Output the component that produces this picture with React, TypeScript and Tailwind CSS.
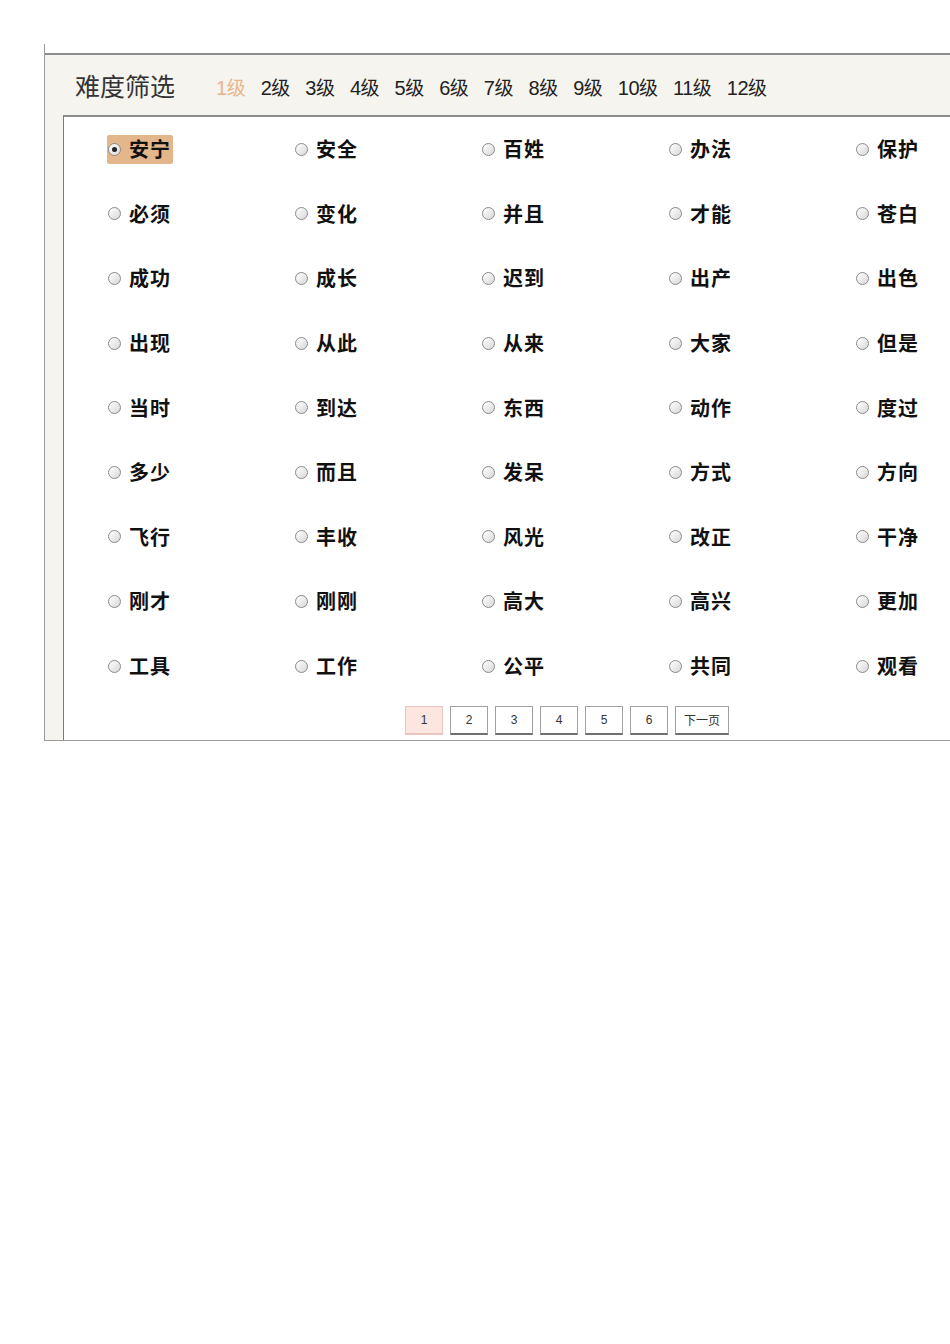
import { useState } from "react";

const words = [
  "安宁", "安全", "百姓", "办法", "保护",
  "必须", "变化", "并且", "才能", "苍白",
  "成功", "成长", "迟到", "出产", "出色",
  "出现", "从此", "从来", "大家", "但是",
  "当时", "到达", "东西", "动作", "度过",
  "多少", "而且", "发呆", "方式", "方向",
  "飞行", "丰收", "风光", "改正", "干净",
  "刚才", "刚刚", "高大", "高兴", "更加",
  "工具", "工作", "公平", "共同", "观看",
];

const levels = ["1", "2", "3", "4", "5", "6", "7", "8", "9", "10", "11", "12"];

function Radio({ checked }: { checked: boolean }) {
  return (
    <span className="w-[13px] h-[13px] shrink-0 rounded-full border border-[#8a8a8a] bg-gradient-to-br from-[#ffffff] to-[#d8d8d8] flex items-center justify-center">
      {checked && <span className="w-[5px] h-[5px] rounded-full bg-[#222]" />}
    </span>
  );
}

export default function App() {
  const [selected, setSelected] = useState(0);
  const [level, setLevel] = useState(0);
  const [page, setPage] = useState(1);

  return (
    <div
      className="w-[950px] h-[1344px] bg-white overflow-hidden pt-[44px]"
      style={{ fontFamily: '"Liberation Sans", "Noto Sans CJK SC", sans-serif' }}
    >
      <div className="ml-[44px] pt-[9px] border-l border-[#9a9a9a]">
        <div className="border-t-2 border-b border-t-[#8c8c8c] border-b-[#9a9a9a] bg-[#f5f4ee]">
          {/* Header */}
          <div className="h-[60px] flex items-center pl-[30px]">
            <span className="text-[25px] text-[#333] leading-none" style={{ fontFamily: '"Noto Sans CJK SC", sans-serif' }}>
              难度筛选
            </span>
            <div className="ml-[41px] mt-[4px] flex items-center gap-[15px] text-[20px] leading-none">
              {levels.map((l, i) => (
                <button
                  key={l}
                  onClick={() => setLevel(i)}
                  className={`flex items-baseline ${i === level ? "text-[#ebb58c]" : "text-[#222]"}`}
                >
                  <span className="tracking-[-0.5px]">{l}</span>
                  <span className="text-[19px]" style={{ fontFamily: '"Noto Sans CJK SC", sans-serif' }}>级</span>
                </button>
              ))}
            </div>
          </div>

          {/* Word list */}
          <div className="ml-[18px] border-t-2 border-l border-t-[#8c8c8c] border-l-[#7a7a7a] bg-white pb-[5px]">
            <div className="grid grid-cols-[187px_187px_187px_187px_187px] pl-[43px]">
              {words.map((w, i) => (
                <div key={w} className="h-[64.6px] flex items-center">
                  <button
                    onClick={() => setSelected(i)}
                    className={`flex items-center gap-[8px] h-[29px] px-[1px] rounded-[2px] ${i === selected ? "bg-[#e4b68b]" : ""}`}
                  >
                    <Radio checked={i === selected} />
                    <span
                      className="text-[20px] font-bold text-[#111] tracking-[1px] leading-none pr-[1px]"
                      style={{ fontFamily: '"Noto Sans CJK SC", sans-serif' }}
                    >
                      {w}
                    </span>
                  </button>
                </div>
              ))}
            </div>

            {/* Pagination */}
            <div className="mt-[8px] ml-[341px] flex gap-[7px]">
              {[1, 2, 3, 4, 5, 6].map((p) => (
                <button
                  key={p}
                  onClick={() => setPage(p)}
                  className={`w-[38px] h-[29px] text-[12px] text-[#333] border border-b-2 ${
                    p === page ? "bg-[#fde5e0] border-[#e8c4bc] border-b-[#e8c4bc]" : "bg-white border-[#a0a0a0] border-b-[#707070]"
                  }`}
                >
                  {p}
                </button>
              ))}
              <button className="w-[54px] h-[29px] text-[12px] text-[#333] bg-white border border-b-2 border-[#a0a0a0] border-b-[#707070]" style={{ fontFamily: '"Noto Sans CJK SC", sans-serif' }}>
                下一页
              </button>
            </div>
          </div>
        </div>
      </div>
    </div>
  );
}
